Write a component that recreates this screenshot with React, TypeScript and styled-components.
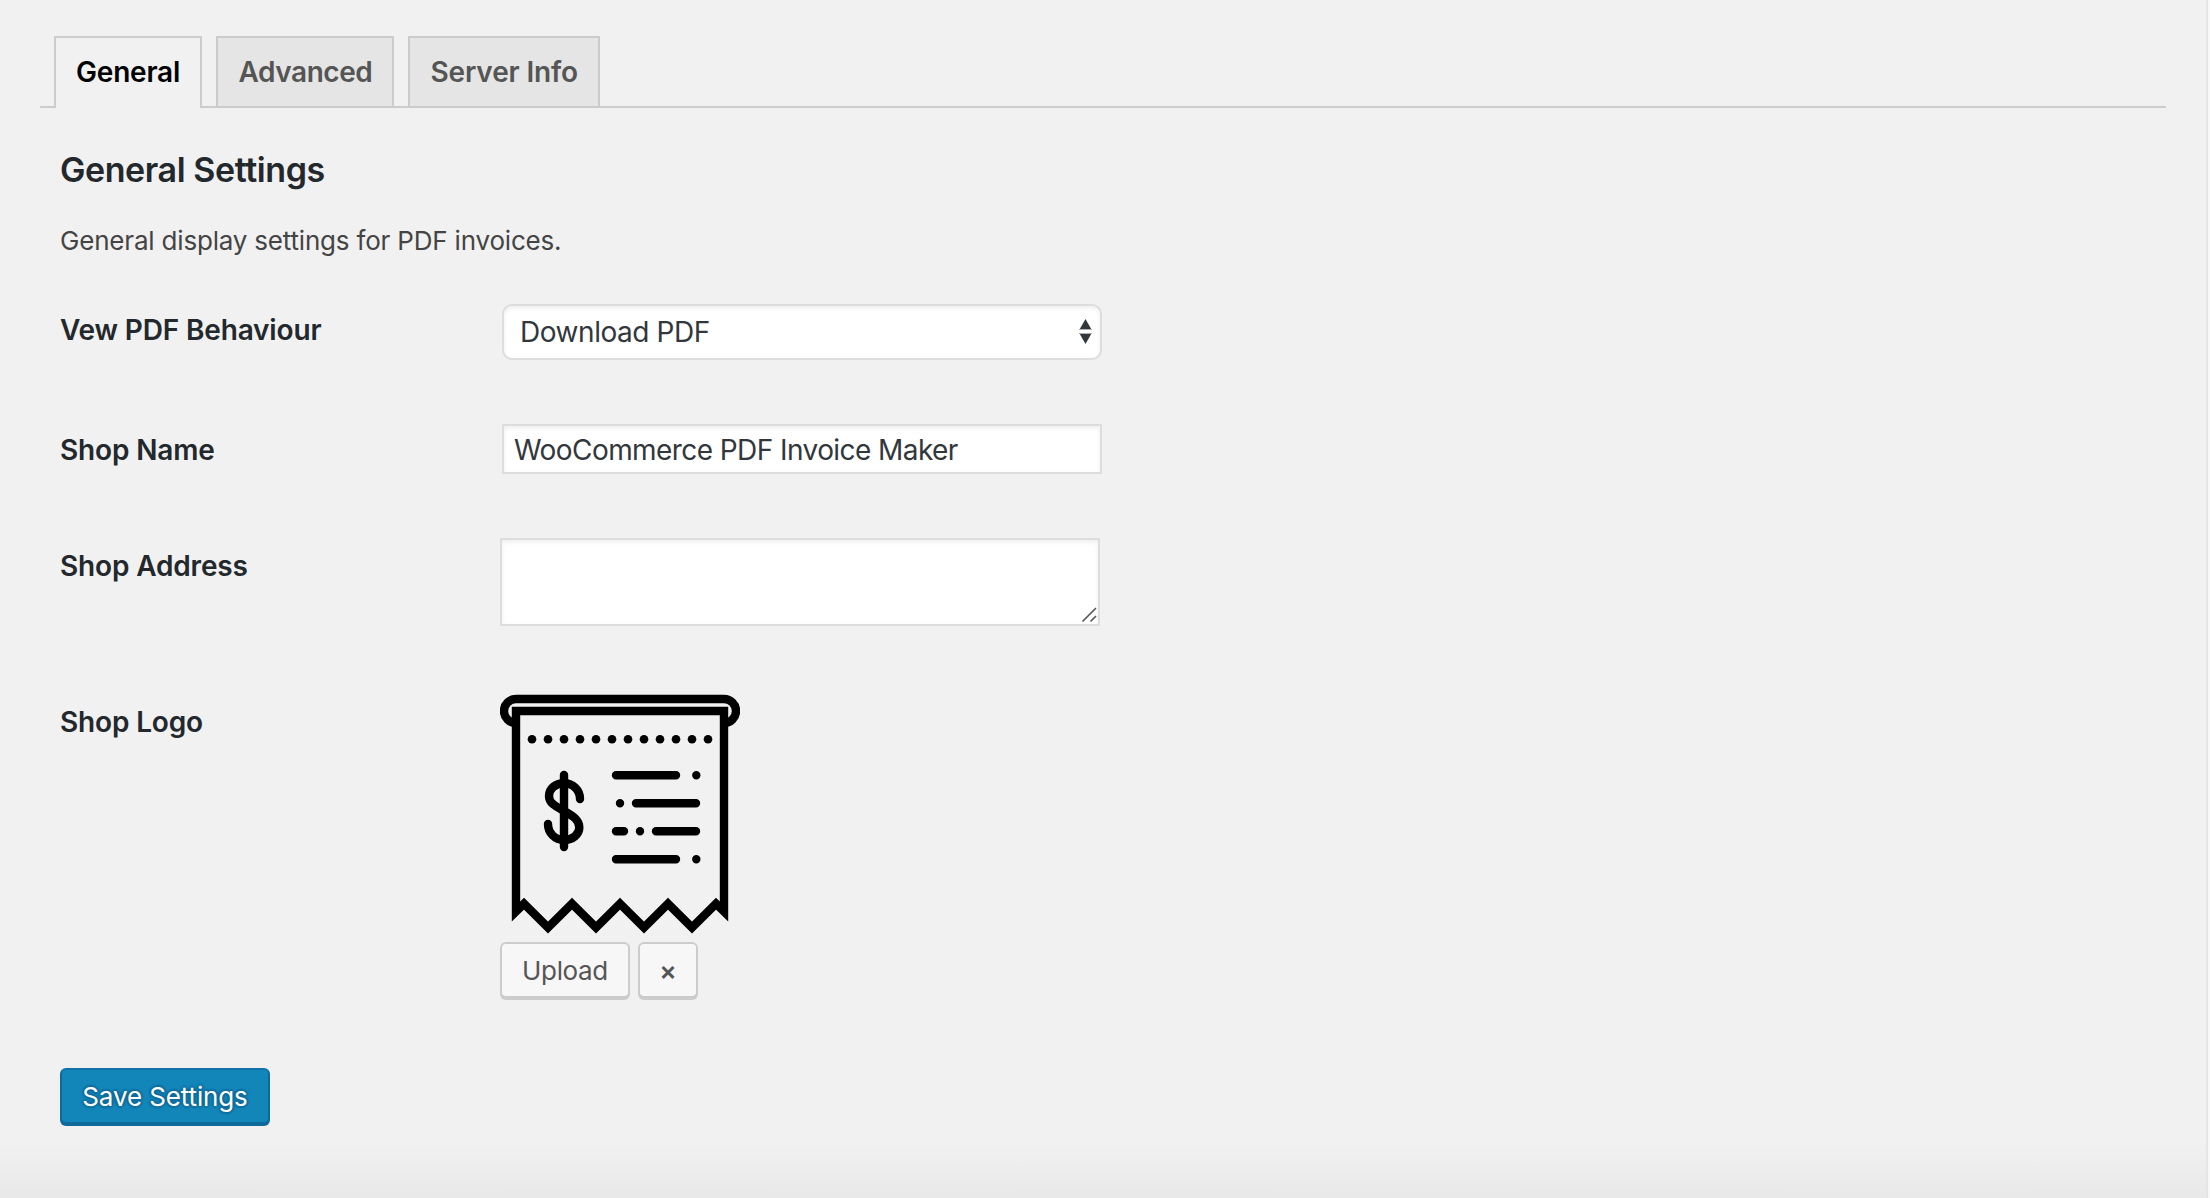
import React from 'react';
import styled, { createGlobalStyle, css } from 'styled-components';

const Global = createGlobalStyle`
  *, *::before, *::after { box-sizing: border-box; }
  html, body { margin: 0; padding: 0; background: #f1f1f1; }
  body, input, select, textarea, button {
    font-family: Inter, "Liberation Sans", sans-serif;
  }
`;

const Page = styled.main`
  width: 2210px;
  height: 1198px;
  overflow: hidden;
  padding: 36px 40px 0;
  border-right: 2px solid #f8f8f8;
  box-shadow: inset -2px 0 0 #e5e5e5;
  background: linear-gradient(to bottom, rgba(0, 0, 0, 0) 1142px, rgba(0, 0, 0, 0.035) 1198px) #f1f1f1;
`;

const Tabs = styled.nav`
  display: flex;
  gap: 14px;
  width: 2126px;
  height: 72px;
  padding-left: 14px;
  border-bottom: 2px solid #ccc;
`;

const Tab = styled.a<{ $w: number; $ls: number; $active?: boolean }>`
  width: ${p => p.$w}px;
  height: 70px;
  padding: 10px 0 10px 20.5px;
  border: 2px solid #ccc;
  border-bottom: 0;
  background: #e5e5e5;
  color: #555;
  font-size: 28px;
  font-weight: 600;
  line-height: 48px;
  letter-spacing: ${p => p.$ls}px;
  white-space: nowrap;
  ${p => p.$active && css`
    height: 72px;
    padding-left: 20px;
    background: #f1f1f1;
    color: #000;
  `}
`;

const Panel = styled.section`
  padding: 40px 20px 0;
`;

const Title = styled.h2`
  margin: 0 0 29px;
  color: #23282d;
  font-size: 34px;
  font-weight: 600;
  line-height: 44px;
  letter-spacing: -0.42px;
`;

const Intro = styled.p`
  margin: 0 0 43px;
  color: #444;
  font-size: 26px;
  line-height: 40px;
  letter-spacing: -0.19px;
`;

const Row = styled.div<{ $gap: number; $nudge: number }>`
  display: grid;
  grid-template-columns: 440px 602px;
  align-items: start;
  margin-bottom: ${p => p.$gap}px;
  & > label { padding-top: ${p => p.$nudge}px; }
`;

const Label = styled.label`
  color: #23282d;
  font-size: 28px;
  font-weight: 600;
  line-height: 36px;
  letter-spacing: -0.16px;
`;

const control = css`
  display: block;
  width: 600px;
  margin: 0;
  border: 2px solid #ddd;
  border-radius: 0;
  outline: 0;
  background: #fff;
  box-shadow: inset 0 2px 4px rgba(0, 0, 0, 0.07);
  color: #32373c;
  font-size: 28px;
  appearance: none;
`;

const SelectWrap = styled.div`
  position: relative;
  width: 600px;
  margin-left: 2px;
`;

const Select = styled.select`
  ${control}
  height: 56px;
  padding: 0 40px 0 16px;
  border-radius: 10px;
  line-height: 48px;
  letter-spacing: -0.45px;
`;

const Arrows = styled.svg`
  position: absolute;
  top: 15px;
  right: 9px;
  pointer-events: none;
`;

const Input = styled.input`
  ${control}
  height: 50px;
  margin-left: 2px;
  padding: 2px 10px 0;
  letter-spacing: -0.57px;
`;

const AreaWrap = styled.div`
  position: relative;
  width: 600px;
`;

const Area = styled.textarea`
  ${control}
  height: 88px;
  padding: 4px 12px;
  resize: none;
`;

const Grip = styled.svg`
  position: absolute;
  right: 2px;
  bottom: 3px;
`;

const Logo = styled.svg`
  display: block;
  margin-bottom: 8px;
`;

const Buttons = styled.div`
  display: flex;
  gap: 8px;
`;

const Button = styled.button<{ $w: number; $ls?: number; $weight?: number }>`
  width: ${p => p.$w}px;
  height: 56px;
  padding: 1px 0 0;
  border: 2px solid #ccc;
  border-radius: 6px;
  background: #f7f7f7;
  box-shadow: 0 2px 0 #ccc;
  color: #555;
  font-size: 26px;
  font-weight: ${p => p.$weight ?? 400};
  line-height: 51px;
  letter-spacing: ${p => p.$ls ?? 0}px;
  white-space: nowrap;
`;

const Primary = styled(Button)`
  border-color: #0f73a8 #0f6a9b #0f6a9b;
  background: #1386b9;
  box-shadow: 0 2px 0 #0f6a9b;
  color: #fff;
  text-shadow: 0 -2px 2px #0f6a9b, 2px 0 2px #0f6a9b, 0 2px 2px #0f6a9b, -2px 0 2px #0f6a9b;
`;

const dots = Array.from({ length: 12 }, (_, i) => 32 + i * 16);

function ReceiptLogo() {
  return (
    <Logo width="240" height="240" viewBox="0 0 240 240" fill="none" stroke="#000" strokeWidth="8.4">
      <path d="M16 29A12 12 0 0 1 16 5H224A12 12 0 0 1 224 29" />
      <path strokeMiterlimit="10" d="M16 17H224V217.5L216 209.7L192 233.5L168 209.7L144 233.5L120 209.7L96 233.5L72 209.7L48 233.5L24 209.7L16 217.5Z" />
      {dots.map(x => <circle key={x} cx={x} cy="45.3" r="4.3" fill="#000" stroke="none" />)}
      <g strokeLinecap="round">
        <path d="M64 81V153" />
        <path d="M80 105C80 96 73 89.3 64 89.3C55 89.3 49 95 49 102C49 109 55 112 64 117C73 122 79.3 126 79.3 133.5C79.3 140 73 146 64 146C55 146 48 139 48 130" />
        <path d="M116 81.3H176M196.3 81.3h.01M120 109.3h.01M136 109.3H196M116 137.3H124M140 137.3h.01M156 137.3H196M116 165.3H176M196.3 165.3h.01" />
      </g>
    </Logo>
  );
}

export default function App() {
  return (
    <>
      <Global />
      <Page>
        <Tabs>
          <Tab $w={148} $ls={-0.2} $active>General</Tab>
          <Tab $w={178} $ls={-0.45}>Advanced</Tab>
          <Tab $w={192} $ls={-0.15}>Server Info</Tab>
        </Tabs>
        <Panel>
          <Title>General Settings</Title>
          <Intro>General display settings for PDF invoices.</Intro>
          <Row $gap={64} $nudge={8}>
            <Label>Vew PDF Behaviour</Label>
            <SelectWrap>
              <Select defaultValue="download"><option value="download">Download PDF</option></Select>
              <Arrows width="14" height="26" viewBox="0 0 14 26" fill="#32373c">
                <path d="M6.5 0L12.2 10H0.8Z" />
                <path d="M0 10H13V11H0ZM0 14H13V15H0Z" opacity="0.4" />
                <path d="M0.8 15H12.2L6.5 25Z" />
              </Arrows>
            </SelectWrap>
          </Row>
          <Row $gap={64} $nudge={8}>
            <Label>Shop Name</Label>
            <Input defaultValue="WooCommerce PDF Invoice Maker" />
          </Row>
          <Row $gap={68} $nudge={10}>
            <Label>Shop Address</Label>
            <AreaWrap>
              <Area />
              <Grip width="18" height="18" viewBox="0 0 18 18" stroke="#555" strokeWidth="1.6">
                <path d="M2.5 16.5L16 3M10.5 16.5L16 11" />
              </Grip>
            </AreaWrap>
          </Row>
          <Row $gap={70} $nudge={10}>
            <Label>Shop Logo</Label>
            <div>
              <ReceiptLogo />
              <Buttons>
                <Button $w={130} $ls={-0.35}>Upload</Button>
                <Button $w={60} $weight={600}>×</Button>
              </Buttons>
            </div>
          </Row>
          <Primary $w={210} $ls={-0.12}>Save Settings</Primary>
        </Panel>
      </Page>
    </>
  );
}
